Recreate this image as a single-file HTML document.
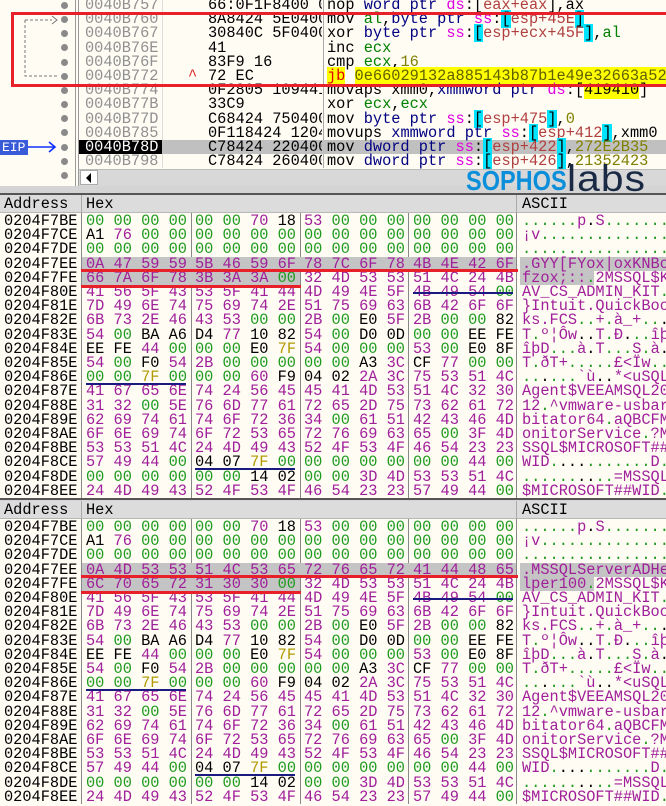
<!DOCTYPE html>
<html><head><meta charset="utf-8">
<style>
*{margin:0;padding:0;box-sizing:border-box}
body{width:666px;height:804px;overflow:hidden;position:relative;background:#fffcf4;font-family:"Liberation Mono",monospace;font-size:15.3px;color:#a0209a}
.ab{position:absolute}
g{color:#1e9a1e}k{color:#000}y{color:#b09a00}
.r{position:absolute;left:0;width:666px;height:14.2px;line-height:14.2px;white-space:pre}
.r span{position:absolute;top:0}
.a{left:4px;color:#000}
.h1{left:86px}.h2{left:195px}.h3{left:304px}.h4{left:413px}
.s{left:522px}
.hl{background:#c4c4c4}
.d{position:absolute;left:0;width:666px;height:14.2px;line-height:14.2px;white-space:pre;color:#000}
.d span{position:absolute;top:0}
.da{left:85px;color:#909090}
.db{left:208px;width:114px;overflow:hidden}
.di{left:327px}
.dot{position:absolute;left:61px;width:7px;height:7px;border-radius:50%;background:#8a8a8a}
n{color:#000080}m{color:#e000e0}x{color:#008000}o{color:#808000}
c{background:#00e4ff;color:#000}e{color:#b04040}
.hdr{position:absolute;left:0;width:666px;height:18px;background:#dcdcdc;border-bottom:1px solid #b8b8b8;color:#000;line-height:18px}
.vl{position:absolute;width:1px;background:#888}
</style></head><body>

<div class="ab" style="left:0;top:0;width:666px;height:186px;background:#fffcf4"></div>
<div class="vl" style="left:75px;top:0;height:186px;background:#999"></div>
<div class="vl" style="left:78px;top:0;height:186px;background:#999"></div>
<div class="vl" style="left:162px;top:0;height:168px;background:#ddd"></div>
<div class="vl" style="left:323px;top:0;height:168px;background:#aaa"></div>

<div class="dot" style="top:2px"></div><div class="dot" style="top:16px"></div><div class="dot" style="top:30px"></div><div class="dot" style="top:44px"></div><div class="dot" style="top:59px"></div><div class="dot" style="top:73px"></div><div class="dot" style="top:87px"></div><div class="dot" style="top:101px"></div><div class="dot" style="top:115px"></div><div class="dot" style="top:129px"></div><div class="dot" style="top:144px"></div><div class="dot" style="top:158px"></div><div class="dot" style="top:172px"></div>

<svg class="ab" style="left:0;top:0" width="76" height="170">
<path d="M25 20 H52 M25 20 V76 H58" stroke="#777" stroke-width="1" stroke-dasharray="3,2" fill="none"/>
<path d="M52 16 L57 20 L52 24" stroke="#777" stroke-width="1" fill="none"/>
<path d="M28 147 H54 M49 142 L55 147 L49 152" stroke="#1030ff" stroke-width="1.6" fill="none"/>
</svg>
<div class="ab" style="left:0;top:140px;width:28px;height:15px;background:#3a5bd8;color:#fff;font-size:13px;line-height:15px;padding-left:2px">EIP</div>

<div class="ab" style="left:162px;top:140px;width:504px;height:14.2px;background:#c0c0c0"></div>
<div class="ab" style="left:79px;top:140px;width:83px;height:14.2px;background:#000"></div>

<div class="d" style="top:-2px"><span class="da">0040B757</span><span class="db">66:0F1F8400 0</span><span class="di">nop <n>word ptr</n> <m>ds</m>:[<e>eax+eax</e>],ax</span></div>
<div class="d" style="top:12.2px"><span class="da">0040B760</span><span class="db">8A8424 5E0400</span><span class="di">mov <x>al</x>,<n>byte ptr</n> <m>ss</m>:<c>[</c><e>esp+45E</e><c>]</c></span></div>
<div class="d" style="top:26.4px"><span class="da">0040B767</span><span class="db">30840C 5F0400</span><span class="di">xor <n>byte ptr</n> <m>ss</m>:<c>[</c><e>esp+ecx+45F</e><c>]</c>,<x>al</x></span></div>
<div class="d" style="top:40.6px"><span class="da">0040B76E</span><span class="db">41</span><span class="di">inc <x>ecx</x></span></div>
<div class="d" style="top:54.8px"><span class="da">0040B76F</span><span class="db">83F9 16</span><span class="di">cmp <x>ecx</x>,<o>16</o></span></div>
<div class="d" style="top:69px"><span class="da">0040B772</span><span style="left:188px;color:#e02020">^</span><span class="db">72 EC</span><span class="di"><span style="position:static;background:#ffff00;color:#e00000">jb</span> <span style="position:static;background:#ffff00;color:#606000">0e66029132a885143b87b1e49e32663a527</span></span></div>
<div class="d" style="top:83.2px"><span class="da">0040B774</span><span class="db">0F2805 109441</span><span class="di">movaps xmm0,<n>xmmword ptr</n> <m>ds</m>:[<span style="position:static;background:#ffff00">419410</span>]</span></div>
<div class="d" style="top:97.4px"><span class="da">0040B77B</span><span class="db">33C9</span><span class="di">xor <x>ecx</x>,<x>ecx</x></span></div>
<div class="d" style="top:111.6px"><span class="da">0040B77D</span><span class="db">C68424 750400</span><span class="di">mov <n>byte ptr</n> <m>ss</m>:<c>[</c><e>esp+475</e><c>]</c>,<o>0</o></span></div>
<div class="d" style="top:125.8px"><span class="da">0040B785</span><span class="db">0F118424 1204</span><span class="di">movups <n>xmmword ptr</n> <m>ss</m>:<c>[</c><e>esp+412</e><c>]</c>,xmm0</span></div>
<div class="d" style="top:140px"><span class="da" style="color:#fff">0040B78D</span><span class="db">C78424 220400</span><span class="di">mov <n>dword ptr</n> <m>ss</m>:<c>[</c><e>esp+422</e><c>]</c>,<o>272E2B35</o></span></div>
<div class="d" style="top:154.2px"><span class="da">0040B798</span><span class="db">C78424 260400</span><span class="di">mov <n>dword ptr</n> <m>ss</m>:<c>[</c><e>esp+426</e><c>]</c>,<o>21352423</o></span></div>

<div class="ab" style="left:11px;top:12px;width:670px;height:75px;border:3px solid #e8202a"></div>

<div class="ab" style="left:79px;top:169px;width:587px;height:17px;background:#d8d8d8;border-top:1px solid #bbb"></div>
<div class="ab" style="left:80px;top:170px;width:18px;height:15px;background:#fff;border:1px solid #aaa"></div>
<div class="ab" style="left:86px;top:173px;width:0;height:0;border-top:5px solid transparent;border-bottom:5px solid transparent;border-right:5px solid #000"></div>

<div class="ab" style="left:0;top:186px;width:666px;height:9px;background:#d4d4d4;border-bottom:2px solid #555"></div>
<div class="ab" style="left:466px;top:166px;font-family:'Liberation Sans',sans-serif;font-weight:bold;font-size:24px;line-height:28px;color:#0b8fdb;transform:scale(0.98,1.15);transform-origin:top left">SOPHOS</div>
<div class="ab" style="left:567px;top:158px;font-family:'Liberation Sans',sans-serif;font-size:37px;line-height:42px;color:#1a2a44;letter-spacing:1px;transform:scaleX(1.1);transform-origin:top left">labs</div>

<div class="hdr" style="top:195px"><span class="ab" style="left:4px">Address</span><span class="ab" style="left:86px">Hex</span><span class="ab" style="left:522px">ASCII</span></div>
<div class="vl" style="left:81px;top:195px;height:18px;background:#aaa"></div>
<div class="vl" style="left:516px;top:195px;height:18px;background:#aaa"></div>
<div class="vl" style="left:81px;top:213px;height:285px"></div>
<div class="vl" style="left:191px;top:213px;height:285px"></div>
<div class="vl" style="left:300px;top:213px;height:285px"></div>
<div class="vl" style="left:408px;top:213px;height:285px"></div>
<div class="vl" style="left:516px;top:213px;height:285px"></div>
<div class="ab hl" style="left:82px;top:256.6px;width:434px;height:14.2px"></div>
<div class="ab hl" style="left:82px;top:270.8px;width:218px;height:14.2px"></div>
<div class="ab hl" style="left:520px;top:256.6px;width:146px;height:14.2px"></div>
<div class="ab hl" style="left:520px;top:270.8px;width:74px;height:14.2px"></div>

<div class="r" style="top:214px"><span class="a">0204F7BE</span><span class="h1"><g>00 00 00 00</g></span><span class="h2"><g>00 00</g> 70 <k>18</k></span><span class="h3">53 <g>00 00 00</g></span><span class="h4"><g>00 00 00 00</g></span><span class="s"><g>......</g>p<k>.</k>S<g>.......</g></span></div>
<div class="r" style="top:228.2px"><span class="a">0204F7CE</span><span class="h1"><k>A1</k> 76 <g>00 00</g></span><span class="h2"><g>00 00 00 00</g></span><span class="h3"><g>00 00 00 00</g></span><span class="h4"><g>00 00 00 00</g></span><span class="s">¡v<g>..............</g></span></div>
<div class="r" style="top:242.4px"><span class="a">0204F7DE</span><span class="h1"><g>00 00 00 00</g></span><span class="h2"><g>00 00 00 00</g></span><span class="h3"><g>00 00 00 00</g></span><span class="h4"><g>00 00 00 00</g></span><span class="s"><g>................</g></span></div>
<div class="r" style="top:256.6px"><span class="a">0204F7EE</span><span class="h1">0A 47 59 59</span><span class="h2">5B 46 59 6F</span><span class="h3">78 7C 6F 78</span><span class="h4">4B 4E 42 6F</span><span class="s">.GYY[FYox|oxKNBo</span></div>
<div class="r" style="top:270.8px"><span class="a">0204F7FE</span><span class="h1">66 7A 6F 78</span><span class="h2">3B 3A 3A <g>00</g></span><span class="h3">32 4D 53 53</span><span class="h4">51 4C 24 4B</span><span class="s">fzox;::<g>.</g>2MSSQL$K</span></div>
<div class="r" style="top:285px"><span class="a">0204F80E</span><span class="h1">41 56 5F 43</span><span class="h2">53 5F 41 44</span><span class="h3">4D 49 4E 5F</span><span class="h4">4B 49 54 <g>00</g></span><span class="s">AV_CS_ADMIN_KIT<g>.</g></span></div>
<div class="r" style="top:299.2px"><span class="a">0204F81E</span><span class="h1">7D 49 6E 74</span><span class="h2">75 69 74 2E</span><span class="h3">51 75 69 63</span><span class="h4">6B 42 6F 6F</span><span class="s">}Intuit.QuickBoo</span></div>
<div class="r" style="top:313.4px"><span class="a">0204F82E</span><span class="h1">6B 73 2E 46</span><span class="h2">43 53 <g>00 00</g></span><span class="h3">2B <g>00</g> <k>E0</k> 5F</span><span class="h4">2B <g>00 00</g> <k>82</k></span><span class="s">ks.FCS<g>..</g>+<g>.</g>à_+<g>..</g><k>.</k></span></div>
<div class="r" style="top:327.6px"><span class="a">0204F83E</span><span class="h1">54 <g>00</g> <k>BA A6</k></span><span class="h2"><k>D4</k> 77 <k>10 82</k></span><span class="h3">54 <g>00</g> <k>D0 0D</k></span><span class="h4"><g>00 00</g> <k>EE FE</k></span><span class="s">T<g>.</g>º¦Ôw<k>..</k>T<g>.</g>Ð<k>.</k><g>..</g>îþ</span></div>
<div class="r" style="top:341.8px"><span class="a">0204F84E</span><span class="h1"><k>EE FE</k> 44 <g>00</g></span><span class="h2"><g>00 00</g> <k>E0</k> <y>7F</y></span><span class="h3">54 <g>00 00 00</g></span><span class="h4">53 <g>00</g> <k>E0 8F</k></span><span class="s">îþD<g>...</g>à<k>.</k>T<g>...</g>S<g>.</g>à<k>.</k></span></div>
<div class="r" style="top:356px"><span class="a">0204F85E</span><span class="h1">54 <g>00</g> <k>F0</k> 54</span><span class="h2">2B <g>00 00 00</g></span><span class="h3"><g>00 00</g> <k>A3</k> 3C</span><span class="h4"><k>CF</k> 77 <g>00 00</g></span><span class="s">T<g>.</g>ðT+<g>.....</g>£&lt;Ïw<g>..</g></span></div>
<div class="r" style="top:370.2px"><span class="a">0204F86E</span><span class="h1"><g>00 00</g> <y>7F</y> <g>00</g></span><span class="h2"><g>00 00</g> 60 <k>F9</k></span><span class="h3"><k>04 02</k> 2A 3C</span><span class="h4">75 53 51 4C</span><span class="s"><g>..</g><k>.</k><g>...</g>`ù<k>..</k>*&lt;uSQL</span></div>
<div class="r" style="top:384.4px"><span class="a">0204F87E</span><span class="h1">41 67 65 6E</span><span class="h2">74 24 56 45</span><span class="h3">45 41 4D 53</span><span class="h4">51 4C 32 30</span><span class="s">Agent$VEEAMSQL20</span></div>
<div class="r" style="top:398.6px"><span class="a">0204F88E</span><span class="h1">31 32 <g>00</g> 5E</span><span class="h2">76 6D 77 61</span><span class="h3">72 65 2D 75</span><span class="h4">73 62 61 72</span><span class="s">12<g>.</g>^vmware-usbar</span></div>
<div class="r" style="top:412.8px"><span class="a">0204F89E</span><span class="h1">62 69 74 61</span><span class="h2">74 6F 72 36</span><span class="h3">34 <g>00</g> 61 51</span><span class="h4">42 43 46 4D</span><span class="s">bitator64<g>.</g>aQBCFM</span></div>
<div class="r" style="top:427px"><span class="a">0204F8AE</span><span class="h1">6F 6E 69 74</span><span class="h2">6F 72 53 65</span><span class="h3">72 76 69 63</span><span class="h4">65 <g>00</g> 3F 4D</span><span class="s">onitorService<g>.</g>?M</span></div>
<div class="r" style="top:441.2px"><span class="a">0204F8BE</span><span class="h1">53 53 51 4C</span><span class="h2">24 4D 49 43</span><span class="h3">52 4F 53 4F</span><span class="h4">46 54 23 23</span><span class="s">SSQL$MICROSOFT##</span></div>
<div class="r" style="top:455.4px"><span class="a">0204F8CE</span><span class="h1">57 49 44 <g>00</g></span><span class="h2"><k>04 07</k> <y>7F</y> <g>00</g></span><span class="h3"><g>00 00 00 00</g></span><span class="h4"><g>00 00</g> 44 <g>00</g></span><span class="s">WID<g>.</g><k>...</k><g>.......</g>D<g>.</g></span></div>
<div class="r" style="top:469.6px"><span class="a">0204F8DE</span><span class="h1"><g>00 00 00 00</g></span><span class="h2"><g>00 00</g> <k>14 02</k></span><span class="h3"><g>00 00</g> 3D 4D</span><span class="h4">53 53 51 4C</span><span class="s"><g>......</g><k>..</k><g>..</g>=MSSQL</span></div>
<div class="r" style="top:483.8px"><span class="a">0204F8EE</span><span class="h1">24 4D 49 43</span><span class="h2">52 4F 53 4F</span><span class="h3">46 54 23 23</span><span class="h4">57 49 44 <g>00</g></span><span class="s">$MICROSOFT##WID<g>.</g></span></div>

<div class="ab" style="left:81px;top:269px;width:437px;height:3px;background:#e8202a"></div>
<div class="ab" style="left:81px;top:284.5px;width:220px;height:3px;background:#e8202a"></div>
<div class="ab" style="left:413px;top:292px;width:100px;height:2px;background:#1a1a80"></div>
<div class="ab" style="left:86px;top:383px;width:100px;height:2px;background:#1a1a80"></div>
<div class="ab" style="left:195px;top:468px;width:100px;height:2px;background:#1a1a80"></div>

<div class="ab" style="left:0;top:498px;width:666px;height:3px;background:#d4d4d4;border-top:2px solid #555"></div>
<div class="hdr" style="top:501px"><span class="ab" style="left:4px">Address</span><span class="ab" style="left:86px">Hex</span><span class="ab" style="left:522px">ASCII</span></div>
<div class="vl" style="left:81px;top:501px;height:18px;background:#aaa"></div>
<div class="vl" style="left:516px;top:501px;height:18px;background:#aaa"></div>
<div class="vl" style="left:81px;top:519px;height:285px"></div>
<div class="vl" style="left:191px;top:519px;height:285px"></div>
<div class="vl" style="left:300px;top:519px;height:285px"></div>
<div class="vl" style="left:408px;top:519px;height:285px"></div>
<div class="vl" style="left:516px;top:519px;height:285px"></div>
<div class="ab hl" style="left:82px;top:562.6px;width:434px;height:14.2px"></div>
<div class="ab hl" style="left:82px;top:576.8px;width:218px;height:14.2px"></div>
<div class="ab hl" style="left:520px;top:562.6px;width:146px;height:14.2px"></div>
<div class="ab hl" style="left:520px;top:576.8px;width:74px;height:14.2px"></div>

<div class="r" style="top:520px"><span class="a">0204F7BE</span><span class="h1"><g>00 00 00 00</g></span><span class="h2"><g>00 00</g> 70 <k>18</k></span><span class="h3">53 <g>00 00 00</g></span><span class="h4"><g>00 00 00 00</g></span><span class="s"><g>......</g>p<k>.</k>S<g>.......</g></span></div>
<div class="r" style="top:534.2px"><span class="a">0204F7CE</span><span class="h1"><k>A1</k> 76 <g>00 00</g></span><span class="h2"><g>00 00 00 00</g></span><span class="h3"><g>00 00 00 00</g></span><span class="h4"><g>00 00 00 00</g></span><span class="s">¡v<g>..............</g></span></div>
<div class="r" style="top:548.4px"><span class="a">0204F7DE</span><span class="h1"><g>00 00 00 00</g></span><span class="h2"><g>00 00 00 00</g></span><span class="h3"><g>00 00 00 00</g></span><span class="h4"><g>00 00 00 00</g></span><span class="s"><g>................</g></span></div>
<div class="r" style="top:562.6px"><span class="a">0204F7EE</span><span class="h1">0A 4D 53 53</span><span class="h2">51 4C 53 65</span><span class="h3">72 76 65 72</span><span class="h4">41 44 48 65</span><span class="s">.MSSQLServerADHe</span></div>
<div class="r" style="top:576.8px"><span class="a">0204F7FE</span><span class="h1">6C 70 65 72</span><span class="h2">31 30 30 <g>00</g></span><span class="h3">32 4D 53 53</span><span class="h4">51 4C 24 4B</span><span class="s">lper100<g>.</g>2MSSQL$K</span></div>
<div class="r" style="top:591px"><span class="a">0204F80E</span><span class="h1">41 56 5F 43</span><span class="h2">53 5F 41 44</span><span class="h3">4D 49 4E 5F</span><span class="h4">4B 49 54 <g>00</g></span><span class="s">AV_CS_ADMIN_KIT<g>.</g></span></div>
<div class="r" style="top:605.2px"><span class="a">0204F81E</span><span class="h1">7D 49 6E 74</span><span class="h2">75 69 74 2E</span><span class="h3">51 75 69 63</span><span class="h4">6B 42 6F 6F</span><span class="s">}Intuit.QuickBoo</span></div>
<div class="r" style="top:619.4px"><span class="a">0204F82E</span><span class="h1">6B 73 2E 46</span><span class="h2">43 53 <g>00 00</g></span><span class="h3">2B <g>00</g> <k>E0</k> 5F</span><span class="h4">2B <g>00 00</g> <k>82</k></span><span class="s">ks.FCS<g>..</g>+<g>.</g>à_+<g>..</g><k>.</k></span></div>
<div class="r" style="top:633.6px"><span class="a">0204F83E</span><span class="h1">54 <g>00</g> <k>BA A6</k></span><span class="h2"><k>D4</k> 77 <k>10 82</k></span><span class="h3">54 <g>00</g> <k>D0 0D</k></span><span class="h4"><g>00 00</g> <k>EE FE</k></span><span class="s">T<g>.</g>º¦Ôw<k>..</k>T<g>.</g>Ð<k>.</k><g>..</g>îþ</span></div>
<div class="r" style="top:647.8px"><span class="a">0204F84E</span><span class="h1"><k>EE FE</k> 44 <g>00</g></span><span class="h2"><g>00 00</g> <k>E0</k> <y>7F</y></span><span class="h3">54 <g>00 00 00</g></span><span class="h4">53 <g>00</g> <k>E0 8F</k></span><span class="s">îþD<g>...</g>à<k>.</k>T<g>...</g>S<g>.</g>à<k>.</k></span></div>
<div class="r" style="top:662px"><span class="a">0204F85E</span><span class="h1">54 <g>00</g> <k>F0</k> 54</span><span class="h2">2B <g>00 00 00</g></span><span class="h3"><g>00 00</g> <k>A3</k> 3C</span><span class="h4"><k>CF</k> 77 <g>00 00</g></span><span class="s">T<g>.</g>ðT+<g>.....</g>£&lt;Ïw<g>..</g></span></div>
<div class="r" style="top:676.2px"><span class="a">0204F86E</span><span class="h1"><g>00 00</g> <y>7F</y> <g>00</g></span><span class="h2"><g>00 00</g> 60 <k>F9</k></span><span class="h3"><k>04 02</k> 2A 3C</span><span class="h4">75 53 51 4C</span><span class="s"><g>..</g><k>.</k><g>...</g>`ù<k>..</k>*&lt;uSQL</span></div>
<div class="r" style="top:690.4px"><span class="a">0204F87E</span><span class="h1">41 67 65 6E</span><span class="h2">74 24 56 45</span><span class="h3">45 41 4D 53</span><span class="h4">51 4C 32 30</span><span class="s">Agent$VEEAMSQL20</span></div>
<div class="r" style="top:704.6px"><span class="a">0204F88E</span><span class="h1">31 32 <g>00</g> 5E</span><span class="h2">76 6D 77 61</span><span class="h3">72 65 2D 75</span><span class="h4">73 62 61 72</span><span class="s">12<g>.</g>^vmware-usbar</span></div>
<div class="r" style="top:718.8px"><span class="a">0204F89E</span><span class="h1">62 69 74 61</span><span class="h2">74 6F 72 36</span><span class="h3">34 <g>00</g> 61 51</span><span class="h4">42 43 46 4D</span><span class="s">bitator64<g>.</g>aQBCFM</span></div>
<div class="r" style="top:733px"><span class="a">0204F8AE</span><span class="h1">6F 6E 69 74</span><span class="h2">6F 72 53 65</span><span class="h3">72 76 69 63</span><span class="h4">65 <g>00</g> 3F 4D</span><span class="s">onitorService<g>.</g>?M</span></div>
<div class="r" style="top:747.2px"><span class="a">0204F8BE</span><span class="h1">53 53 51 4C</span><span class="h2">24 4D 49 43</span><span class="h3">52 4F 53 4F</span><span class="h4">46 54 23 23</span><span class="s">SSQL$MICROSOFT##</span></div>
<div class="r" style="top:761.4px"><span class="a">0204F8CE</span><span class="h1">57 49 44 <g>00</g></span><span class="h2"><k>04 07</k> <y>7F</y> <g>00</g></span><span class="h3"><g>00 00 00 00</g></span><span class="h4"><g>00 00</g> 44 <g>00</g></span><span class="s">WID<g>.</g><k>...</k><g>.......</g>D<g>.</g></span></div>
<div class="r" style="top:775.6px"><span class="a">0204F8DE</span><span class="h1"><g>00 00 00 00</g></span><span class="h2"><g>00 00</g> <k>14 02</k></span><span class="h3"><g>00 00</g> 3D 4D</span><span class="h4">53 53 51 4C</span><span class="s"><g>......</g><k>..</k><g>..</g>=MSSQL</span></div>
<div class="r" style="top:789.8px"><span class="a">0204F8EE</span><span class="h1">24 4D 49 43</span><span class="h2">52 4F 53 4F</span><span class="h3">46 54 23 23</span><span class="h4">57 49 44 <g>00</g></span><span class="s">$MICROSOFT##WID<g>.</g></span></div>

<div class="ab" style="left:81px;top:575px;width:437px;height:3px;background:#e8202a"></div>
<div class="ab" style="left:81px;top:590.5px;width:220px;height:3px;background:#e8202a"></div>
<div class="ab" style="left:413px;top:598px;width:100px;height:2px;background:#1a1a80"></div>
<div class="ab" style="left:86px;top:689px;width:100px;height:2px;background:#1a1a80"></div>
<div class="ab" style="left:195px;top:774px;width:100px;height:2px;background:#1a1a80"></div>

</body></html>
